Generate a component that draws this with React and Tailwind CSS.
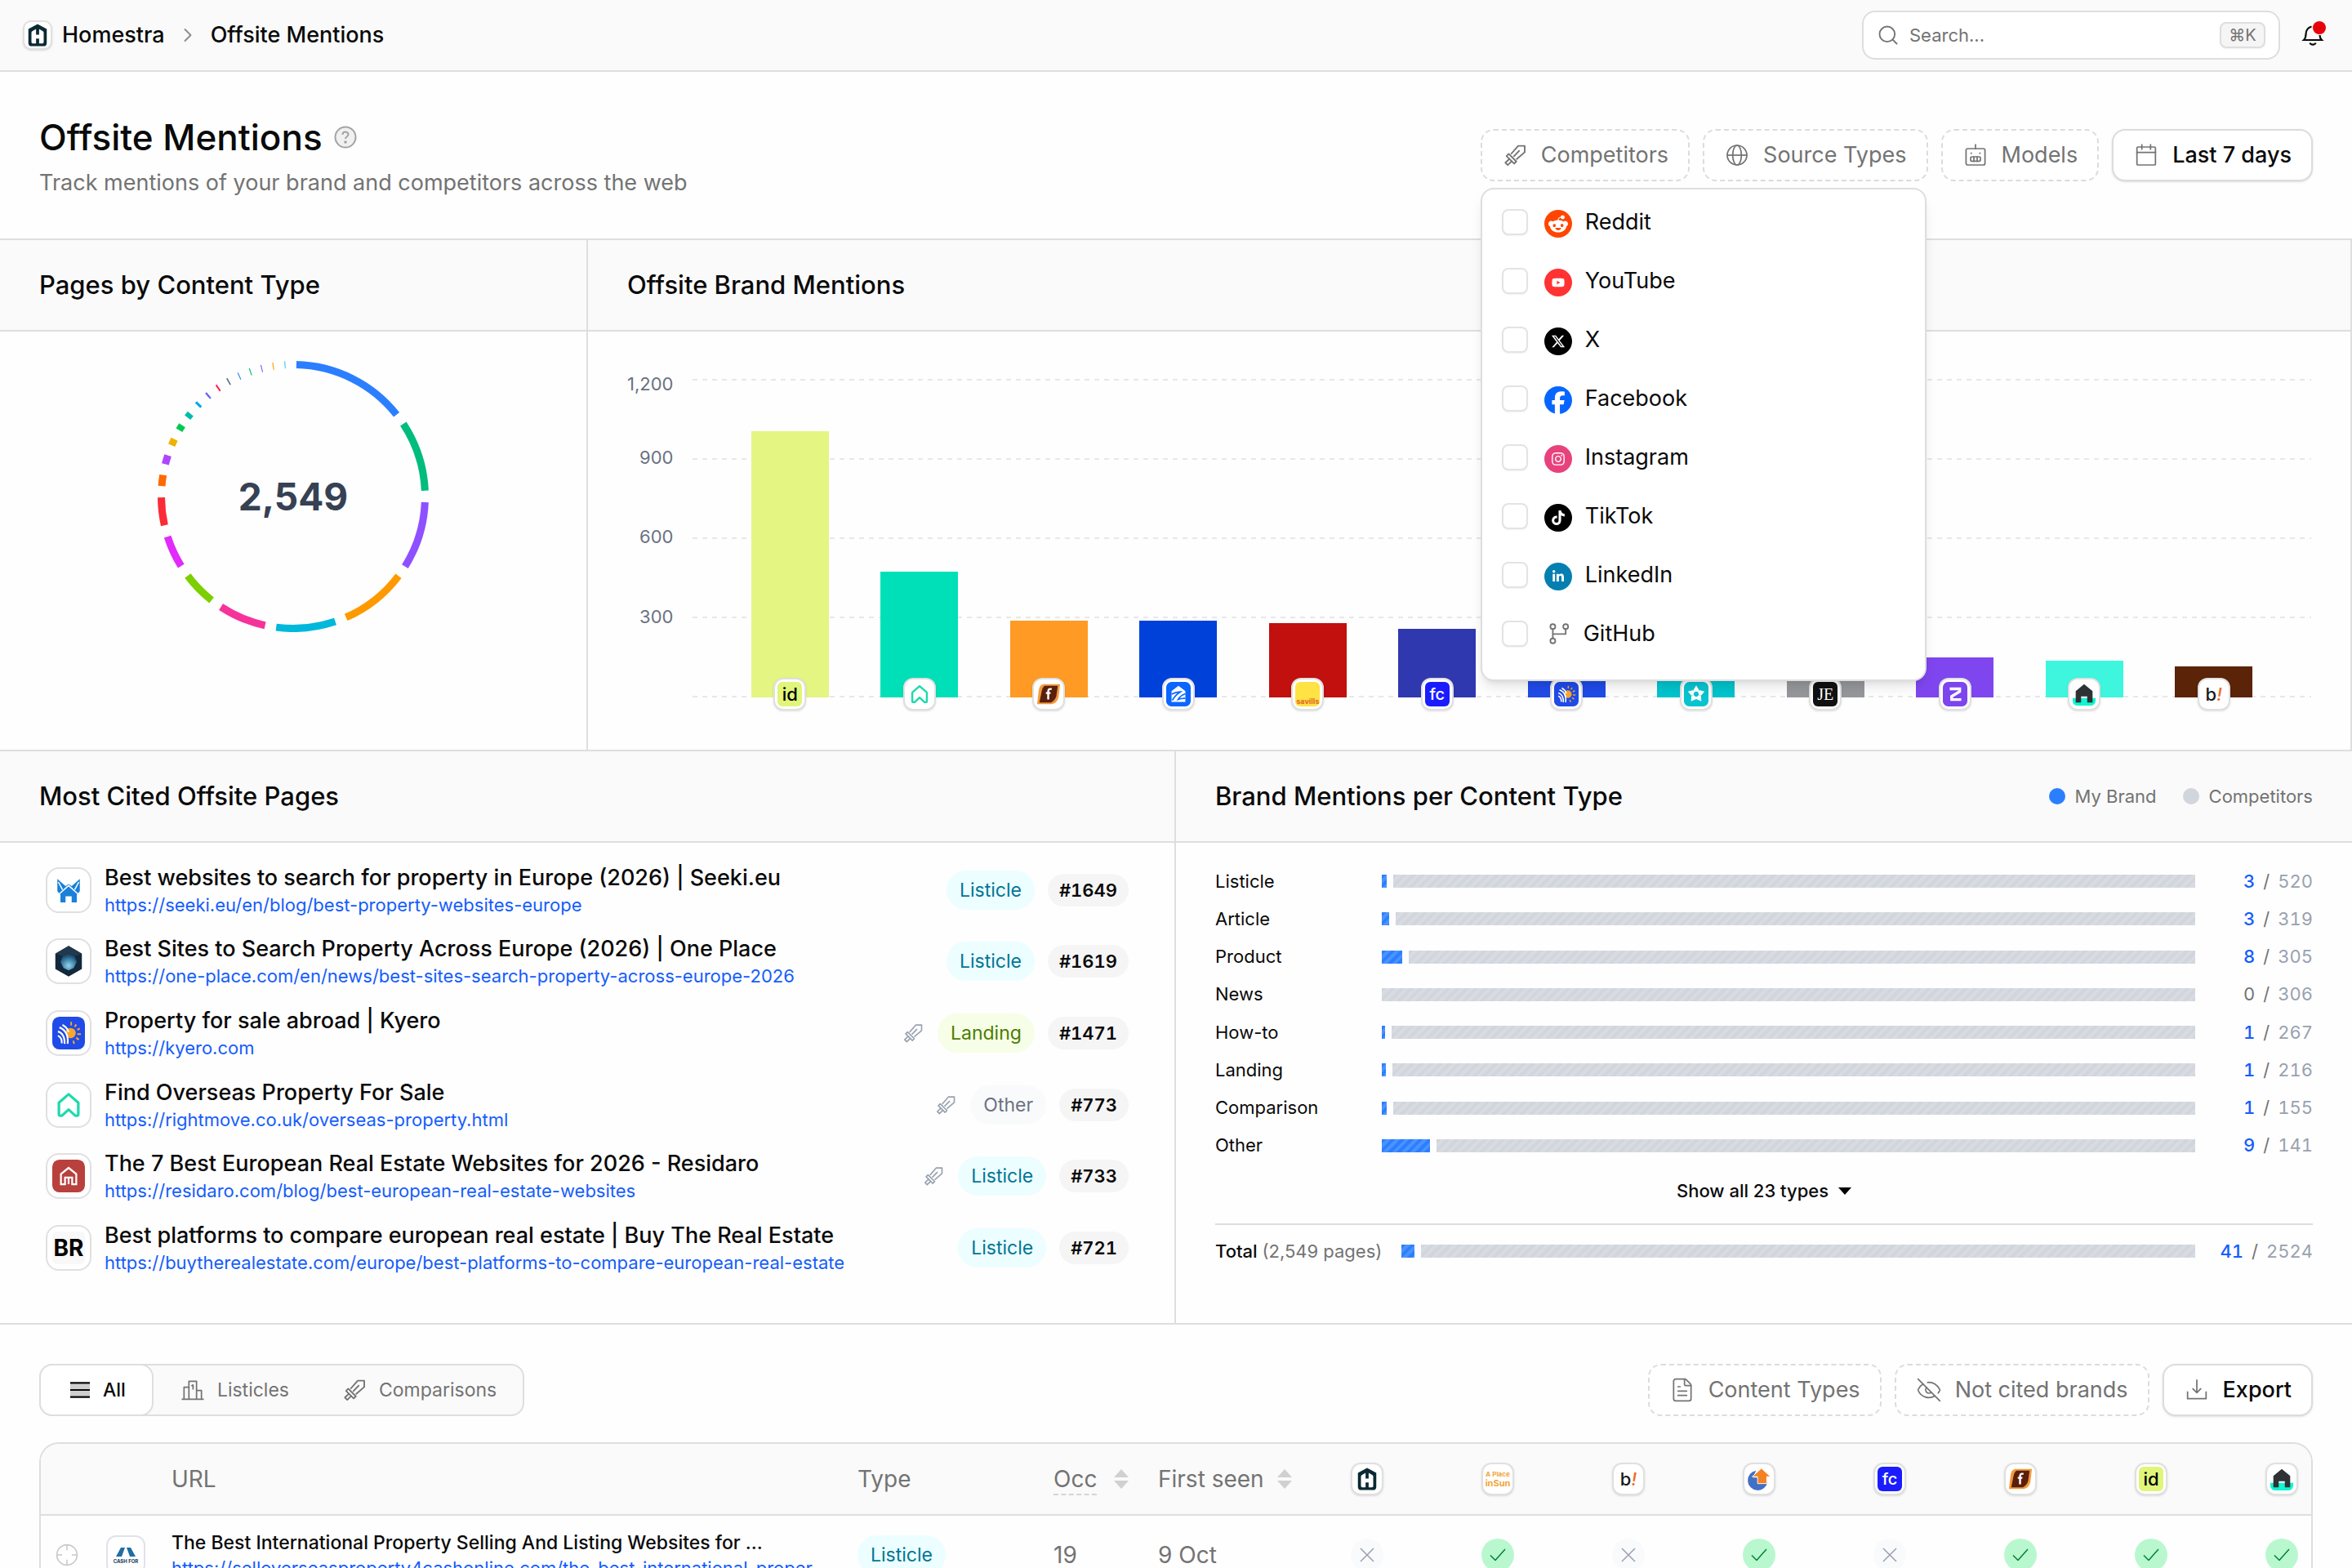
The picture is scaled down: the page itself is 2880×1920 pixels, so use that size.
import React, { useState } from "react";
import { Search, ChevronRight, FileText, EyeOff } from "lucide-react";
import {
  FaRedditAlien,
  FaYoutube,
  FaXTwitter,
  FaFacebook,
  FaInstagram,
  FaTiktok,
  FaLinkedinIn,
} from "react-icons/fa6";

/* ---------- icons ---------- */

function Icon({ className = "size-8", children, width = 1.5 }) {
  return (
    <svg
      viewBox="0 0 24 24"
      className={className}
      fill="none"
      stroke="currentColor"
      strokeWidth={width}
      strokeLinecap="square"
      strokeLinejoin="round"
      aria-hidden="true"
    >
      {children}
    </svg>
  );
}

const SwordIcon = ({ className }) => (
  <Icon className={className} width={1.4}>
    <path d="M8.800 10.500L15 3.500h6V9.300l-7.200 6.200" />
    <path d="M15.800 8.200l-4.600 4.700" />
    <path d="M6.300 10.800l7 7-2 2-7-7z" />
    <path d="M6.800 15.600l-3.600 3.300 2.200 2.200 3.500-3.400" />
  </Icon>
);

const GlobeIcon = () => (
  <Icon width={1.3}>
    <circle cx="12" cy="12" r="9" />
    <ellipse cx="12" cy="12" rx="4" ry="9" />
    <path d="M3.500 12h17" />
  </Icon>
);

const RobotIcon = () => (
  <Icon width={1.3}>
    <rect x="3.300" y="6" width="17.400" height="15" rx="1.500" />
    <path d="M12 2.500V6" />
    <rect x="7.500" y="13.500" width="9" height="4" rx="1" />
    <path d="M10.500 13.500v4M13.500 13.500v4M8 10.300h.1M16 10.300h.1" />
  </Icon>
);

const CalendarIcon = () => (
  <Icon width={1.3}>
    <rect x="3.500" y="4.500" width="17" height="16.500" rx="1" />
    <path d="M3.500 9.500h17M8 2.500v4M16 2.500v4" />
  </Icon>
);

const DownloadIcon = () => (
  <Icon width={1.3}>
    <path d="M12 3v11M8.500 11l3.500 3.500L15.500 11M3.500 14v6h17v-6" />
  </Icon>
);

const PodiumIcon = () => (
  <Icon width={1.3}>
    <path d="M2.500 20.500h19M4 20V9.500h4.500M8.500 20V4h7v16M15.500 12.500H20V20M11.300 8l1-.6v3.500" />
  </Icon>
);

const ListIcon = () => (
  <svg viewBox="0 0 24 24" className="size-8" aria-hidden="true">
    <path d="M3 5.500h18v13H3z" fill="#cfcfcf" />
    <path d="M3 5.500h18M3 12h18M3 18.500h18" stroke="#0a0a0a" strokeWidth="1.6" />
  </svg>
);

const HelpIcon = () => (
  <svg viewBox="0 0 28 28" className="size-7" fill="none" stroke="#a3a3a3" strokeWidth="2" aria-hidden="true">
    <circle cx="14" cy="14" r="12.500" fill="#f0f0f0" />
    <path d="M10.500 11c0-4.600 7-4.400 7-.3 0 2.500-3.500 2.600-3.500 5.300" />
    <circle cx="14" cy="20" r=".8" fill="#a3a3a3" />
  </svg>
);

const BellIcon = () => (
  <svg viewBox="0 0 32 32" className="size-8" fill="none" stroke="#0a0a0a" strokeWidth="2.200" aria-hidden="true">
    <path d="M14.500 5.500C9.500 7 7.500 10.500 7.500 15c0 4-1 5.500-2.500 7h22c-1.500-1.500-2.500-3-2.500-6" />
    <path d="M12.500 25.500c.8 2.700 6.200 2.700 7 0" />
  </svg>
);

const GitIcon = () => (
  <Icon width={1.6} className="size-7">
    <circle cx="5.500" cy="4.500" r="2.600" />
    <circle cx="19" cy="4.500" r="2.600" />
    <circle cx="5.500" cy="19.500" r="2.600" />
    <path d="M5.500 7.800v8.500M19 7.800v4.500H6" />
  </Icon>
);

const CrosshairIcon = () => (
  <Icon width={1.2} className="size-8">
    <circle cx="12" cy="12" r="9.300" />
    <path d="M12 3.500V7M12 17v3.500M3.500 12H7M17 12h3.500" />
  </Icon>
);

function Sorter() {
  return (
    <svg viewBox="0 0 18 24" className="h-6 w-[18px]" fill="#d0d0d0" aria-hidden="true">
      <path d="M9 0l9 10H0zM9 24l9-10H0z" />
    </svg>
  );
}

/* ---------- brand logos ---------- */

function HomestraLogo() {
  return (
    <svg viewBox="0 0 32 32" className="size-full">
      <path d="M16 1.500l12 6.500v18q0 4.500-4.500 4.500h-15Q4 30.500 4 26V8z" fill="#0b2a33" />
      <path
        d="M8 13q0-1.500 1-2l5-3v7.500h4V8l5 3q1 .5 1 2v12q0 2-2 2h-4v-6.500h-4V27h-4q-2 0-2-2z"
        fill="#fff"
      />
    </svg>
  );
}

function IdLogo() {
  return (
    <span className="flex size-full items-center justify-center rounded-md bg-[#e0f57a] text-[22px] font-medium leading-none text-black">
      id
    </span>
  );
}

function RightmoveLogo() {
  return (
    <svg viewBox="0 0 32 32" className="size-full" fill="none" stroke="#1fd9ad" strokeWidth="2.600" strokeLinejoin="round">
      <path d="M16 5.500l9.500 8.300V25q0 1.500-1.500 1.500h-1.500L16 20.500l-6.500 6H8q-1.500 0-1.500-1.500V13.800z" />
    </svg>
  );
}

function FLogo() {
  return (
    <svg viewBox="0 0 32 32" className="size-full">
      <path d="M9 3h22l-2 17q-2 8-9 9H1l2-17q1-8 6-9z" fill="#f39a3c" />
      <path d="M11 5h17l-2 14q-2 6-7 8H4l3-15q1-5 4-7z" fill="#5a1f0c" />
      <path d="M20 9.500c-3.500-1-4.500.5-4.500 3.500v10M12.500 14.500h6" stroke="#fff" strokeWidth="2.600" fill="none" />
    </svg>
  );
}

function ZillowLogo() {
  return (
    <svg viewBox="0 0 32 32" className="size-full">
      <rect width="32" height="32" rx="7" fill="#0a66ff" />
      <path d="M16 5l9 7v14H7V12z" fill="#fff" />
      <path d="M7 16c5-2.500 8-3 11.500-3-5 3-8 6.500-10.500 11" stroke="#0a66ff" strokeWidth="1.800" fill="none" />
      <path d="M25 15.500c-4.500 1.500-7.500 4-9.500 7.500 3-1.300 6-1.800 9.500-1.500" stroke="#0a66ff" strokeWidth="1.800" fill="none" />
    </svg>
  );
}

function SavillsLogo() {
  return (
    <span className="flex size-full items-end justify-center overflow-hidden rounded-md bg-[#ffe243] text-[9px] font-bold leading-3 text-[#e0662a]">
      savills
    </span>
  );
}

function FcLogo() {
  return (
    <span className="flex size-full items-center justify-center rounded-md bg-[#1a1cff] text-xl font-medium leading-none text-white">
      fc
    </span>
  );
}

function KyeroLogo() {
  return (
    <svg viewBox="0 0 32 32" className="size-full">
      <rect width="32" height="32" rx="7" fill="#1f4be8" />
      <circle cx="18" cy="16" r="5" fill="#f8a72b" />
      <path
        d="M18.500 5v3.500M23.500 7.500L22 10M27 11.500l-2.500 1.300M28 17h-3.500M26 22.500l-2.500-2M21.500 26.500l-1-3"
        stroke="#f8a72b"
        strokeWidth="1.600"
      />
      <path d="M5 10c7 0 12 8 10.500 17H5z" fill="#1f4be8" />
      <path
        d="M7 10.500c6 2 9 8 8 16M5.500 14.500c4.500 1 7 6 6.500 12M5.500 18.500c2.500 1 4 4 3.800 7.500M10 8c3 1.500 5 4 6 7"
        stroke="#fff"
        strokeWidth="1.700"
        fill="none"
      />
    </svg>
  );
}

function FlowerLogo() {
  return (
    <svg viewBox="0 0 32 32" className="size-full">
      <rect width="32" height="32" rx="7" fill="#08c4cf" />
      <g fill="#fff">
        {[0, 72, 144, 216, 288].map((a) => (
          <path key={a} d="M16 4.500l3.800 6.200-1.800 2.500q-2-1.200-4 0l-1.800-2.500z" transform={`rotate(${a} 16 16)`} />
        ))}
      </g>
    </svg>
  );
}

function JeLogo() {
  return (
    <span className="flex size-full items-center justify-center rounded-md bg-[#111] font-['Liberation_Serif',serif] text-xl leading-none text-white">
      JE
    </span>
  );
}

function ZLogo() {
  return (
    <svg viewBox="0 0 32 32" className="size-full">
      <rect width="32" height="32" rx="7" fill="#7c45ee" />
      <path d="M9 9h13v3.500L11.500 19v4H24" stroke="#fff" strokeWidth="3.600" fill="none" />
    </svg>
  );
}

function ShedLogo() {
  return (
    <svg viewBox="0 0 32 32" className="size-full">
      <path d="M1 21h30v3q0 7-7 7H8q-7 0-7-7z" fill="#10f5d2" />
      <path d="M16 3l11 9v15h-7v-8h-8v8H5V12z" fill="#2e3234" />
    </svg>
  );
}

function BLogo() {
  return (
    <span className="flex size-full items-center justify-center text-[22px] font-medium leading-none text-[#1a1a1a]">
      b<i className="text-[#f26a21]">!</i>
    </span>
  );
}

function SunLogo() {
  return (
    <span className="flex size-full flex-col items-center justify-center whitespace-nowrap text-[8px] font-bold leading-[10px] text-[#f0a63c]">
      <span>A Place</span>
      <span className="text-[11px] leading-3">inSun</span>
    </span>
  );
}

function ArrowLogo() {
  return (
    <svg viewBox="0 0 32 32" className="size-full">
      <path d="M12 5A13 13 0 1 0 27 20H15v-6H8z" fill="#4270c4" />
      <path d="M19 2l12 11h-5v9H14v-9H7z" fill="#f58220" stroke="#fff" strokeWidth="1" />
    </svg>
  );
}

function SeekiLogo() {
  return (
    <svg viewBox="0 0 32 32" className="size-full">
      <path d="M5 5l8 7 3-2 3 2 8-7v12l-3 3.500V28h-5v-6h-6v6H8v-7.500L5 17z" fill="#1a80d9" />
      <path d="M6.500 20l9.500-8.500 9.500 8.500M6 8l4 7.500M26 8l-4 7.500" stroke="#fff" strokeWidth="1.200" fill="none" />
    </svg>
  );
}

function HexLogo() {
  return (
    <svg viewBox="0 0 32 32" className="size-full">
      <defs>
        <radialGradient id="hex" cx="50%" cy="70%" r="60%">
          <stop offset="0" stopColor="#8fd6ef" />
          <stop offset="1" stopColor="#1b567f" />
        </radialGradient>
      </defs>
      <path d="M16 1l13 7.500v15L16 31 3 23.500v-15z" fill="#14283b" />
      <path d="M16 1l13 7.500L16 13 3 8.500z" fill="#22384e" />
      <path d="M10 11.500l6-2 6 2 2 5-3 6-5 2.500-5-2.500-3-6z" fill="url(#hex)" />
    </svg>
  );
}

function ResidaroLogo() {
  return (
    <svg viewBox="0 0 32 32" className="size-full" fill="none" stroke="#fff" strokeWidth="1.800">
      <rect width="32" height="32" rx="7" fill="#b9403c" stroke="none" />
      <path d="M8.500 24V14L16 8l7.500 6v10h-4v-6.500h-7V24z" />
      <path d="M16 18v6" />
    </svg>
  );
}

function BrLogo() {
  return (
    <span className="flex size-full items-center justify-center rounded-md bg-[#f8f8f8] text-[28px] font-bold leading-none text-black">
      BR
    </span>
  );
}

function CashLogo() {
  return (
    <span className="flex size-full flex-col items-center justify-center">
      <svg viewBox="0 0 28 14" className="h-3.5 w-7">
        <path d="M2 13L8 2h5L9 13zM26 13L20 2h-5l4 11z" fill="#1d6fa5" />
      </svg>
      <span className="whitespace-nowrap text-[6px] font-bold leading-[9px] text-[#123a5c]">CASH FOR</span>
    </span>
  );
}

function BrandTile({ logo: Logo }) {
  return (
    <span className="block size-10 rounded-xl border-2 border-[#e0e0e0] bg-white p-[3px] shadow-sm">
      <Logo />
    </span>
  );
}

/* ---------- data ---------- */

const sources = [
  { name: "Reddit", icon: FaRedditAlien, bg: "bg-[#ff4500]", size: "text-2xl" },
  { name: "YouTube", icon: FaYoutube, bg: "bg-[#ff3333]", size: "text-base" },
  { name: "X", icon: FaXTwitter, bg: "bg-black", size: "text-lg" },
  { name: "Facebook", full: FaFacebook },
  { name: "Instagram", icon: FaInstagram, bg: "bg-[#e8427c]", size: "text-lg" },
  { name: "TikTok", icon: FaTiktok, bg: "bg-black", size: "text-lg" },
  { name: "LinkedIn", icon: FaLinkedinIn, bg: "bg-[#047fb1]", size: "text-base" },
  { name: "GitHub" },
];

const slices = [
  [1.4, 51.6, "#2b7fff"],
  [56.6, 87.4, "#00bc7d"],
  [92.5, 122, "#8e51ff"],
  [127, 156.4, "#fe9a00"],
  [161.4, 187.4, "#00b8db"],
  [192.3, 213.2, "#f6339a"],
  [218.2, 233.1, "#7ccf00"],
  [238.2, 252.3, "#e12afb"],
  [257.4, 269.6, "#fb2c36"],
  [274.6, 279.4, "#ff6900"],
  [284.2, 288.2, "#ad46ff"],
  [292.9, 295.8, "#f0b100"],
  [300.2, 302.7, "#00c951"],
  [306.8, 308.9, "#00bba7"],
  [313.6, 314.7, "#00a6f4"],
  [319.5, 320.3, "#615fff"],
  [325, 325.7, "#ff2056"],
  [330.4, 331, "#62748e"],
  [335.7, 336.1, "#2b7fff"],
  [340.9, 341.3, "#00bc7d"],
  [346, 346.4, "#8e51ff"],
  [351.1, 351.5, "#fe9a00"],
  [356.3, 356.6, "#00b8db"],
];

const brands = [
  { value: 1003, color: "#e4f582", logo: IdLogo },
  { value: 474, color: "#00e0b8", logo: RightmoveLogo },
  { value: 289, color: "#ff9a24", logo: FLogo },
  { value: 289, color: "#0041d9", logo: ZillowLogo },
  { value: 280, color: "#c1100d", logo: SavillsLogo },
  { value: 258, color: "#3038b0", logo: FcLogo },
  { value: 230, color: "#1f4be8", logo: KyeroLogo },
  { value: 200, color: "#00c4cd", logo: FlowerLogo },
  { value: 170, color: "#96979a", logo: JeLogo },
  { value: 151, color: "#7f46ef", logo: ZLogo },
  { value: 138, color: "#3ef6de", logo: ShedLogo },
  { value: 117, color: "#5b2307", logo: BLogo },
];

const pages = [
  {
    title: "Best websites to search for property in Europe (2026) | Seeki.eu",
    url: "https://seeki.eu/en/blog/best-property-websites-europe",
    type: "Listicle",
    rank: 1649,
    logo: SeekiLogo,
  },
  {
    title: "Best Sites to Search Property Across Europe (2026) | One Place",
    url: "https://one-place.com/en/news/best-sites-search-property-across-europe-2026",
    type: "Listicle",
    rank: 1619,
    logo: HexLogo,
  },
  {
    title: "Property for sale abroad | Kyero",
    url: "https://kyero.com",
    type: "Landing",
    rank: 1471,
    competitor: true,
    logo: KyeroLogo,
  },
  {
    title: "Find Overseas Property For Sale",
    url: "https://rightmove.co.uk/overseas-property.html",
    type: "Other",
    rank: 773,
    competitor: true,
    logo: RightmoveLogo,
  },
  {
    title: "The 7 Best European Real Estate Websites for 2026 - Residaro",
    url: "https://residaro.com/blog/best-european-real-estate-websites",
    type: "Listicle",
    rank: 733,
    competitor: true,
    logo: ResidaroLogo,
  },
  {
    title: "Best platforms to compare european real estate | Buy The Real Estate",
    url: "https://buytherealestate.com/europe/best-platforms-to-compare-european-real-estate",
    type: "Listicle",
    rank: 721,
    logo: BrLogo,
  },
];

const contentTypes = [
  ["Listicle", 3, 520],
  ["Article", 3, 319],
  ["Product", 8, 305],
  ["News", 0, 306],
  ["How-to", 1, 267],
  ["Landing", 1, 216],
  ["Comparison", 1, 155],
  ["Other", 9, 141],
];

const tableBrands = [
  [HomestraLogo, false],
  [SunLogo, true],
  [BLogo, false],
  [ArrowLogo, true],
  [FcLogo, false],
  [FLogo, true],
  [IdLogo, true],
  [ShedLogo, true],
];

const typeStyles = {
  Listicle: "bg-cyan-50 text-cyan-700",
  Landing: "bg-lime-50 text-lime-700",
  Other: "bg-gray-50 text-gray-500",
};

/* ---------- pieces ---------- */

function TypePill({ type }) {
  return (
    <span className={`inline-block rounded-full px-4 text-[23px] leading-[48px] ${typeStyles[type]}`}>
      {type}
    </span>
  );
}

function FilterButton({ icon, children }) {
  return (
    <button
      type="button"
      className="flex h-16 items-center gap-4 rounded-2xl border-2 border-dashed border-[#dcdcdc] bg-white px-6 text-[27px] text-[#737373]"
    >
      {icon}
      {children}
    </button>
  );
}

function SolidButton({ icon, children }) {
  return (
    <button
      type="button"
      className="flex h-16 items-center gap-4 rounded-2xl border-2 border-[#dcdcdc] bg-white px-6 text-[27px] font-medium text-[#0a0a0a] shadow-sm"
    >
      <span className="text-[#737373]">{icon}</span>
      {children}
    </button>
  );
}

function SectionHeader({ title, children }) {
  return (
    <div className="flex items-center justify-between border-b-2 border-[#dedede] bg-[#fafafa] px-12 py-8">
      <h2 className="text-[31px] font-medium leading-[46px]">{title}</h2>
      {children}
    </div>
  );
}

function SourceMenu() {
  const [checked, setChecked] = useState([]);

  const toggle = (name) => {
    setChecked(checked.includes(name) ? checked.filter((n) => n !== name) : [...checked, name]);
  };

  return (
    <div className="absolute left-0 top-[72px] z-10 w-[546px] rounded-2xl border-2 border-[#dedede] bg-white px-6 pb-5 pt-1 shadow-lg">
      {sources.map((s) => (
        <label key={s.name} className="flex h-[72px] items-center text-[27px]">
          <input
            type="checkbox"
            checked={checked.includes(s.name)}
            onChange={() => toggle(s.name)}
            className="size-8 appearance-none rounded-lg border-2 border-[#e3e3e3] bg-white shadow-xs checked:bg-[#0a0a0a]"
          />
          {s.icon && (
            <span
              className={`ml-5 mr-4 mt-1 flex size-[34px] items-center justify-center rounded-full text-white ${s.bg} ${s.size}`}
            >
              <s.icon />
            </span>
          )}
          {s.full && <s.full className="ml-5 mr-4 mt-1 size-[34px] text-[#0866ff]" />}
          {!s.icon && !s.full && (
            <span className="ml-6 mr-4 text-[#737373]">
              <GitIcon />
            </span>
          )}
          {s.name}
        </label>
      ))}
    </div>
  );
}

const polar = (r, deg) => {
  const a = (deg * Math.PI) / 180;
  return `${166 + r * Math.sin(a)} ${166 - r * Math.cos(a)}`;
};

function Donut() {
  return (
    <div className="grid place-items-center pt-9">
      <svg viewBox="0 0 332 332" className="col-start-1 row-start-1 size-[332px]">
        {slices.map(([from, to, color]) => (
          <path
            key={from}
            fill={color}
            d={`M${polar(166, from)}A166 166 0 0 1 ${polar(166, to)}L${polar(157, to)}A157 157 0 0 0 ${polar(157, from)}Z`}
          />
        ))}
      </svg>
      <span className="col-start-1 row-start-1 text-[46px] font-bold leading-none text-gray-700">2,549</span>
    </div>
  );
}

function MentionsChart() {
  return (
    <div className="flex gap-6 px-12 pb-16 pt-[58px]">
      <div className="grid h-[390px] w-14 grid-rows-4 text-right text-[22px] leading-6 text-gray-500">
        <span className="-mt-1.5">1,200</span>
        <span className="-mt-3.5">900</span>
        <span className="-mt-3.5">600</span>
        <span className="-mt-3.5">300</span>
      </div>
      <div className="relative h-[390px] flex-1">
        <div className="absolute inset-0 flex flex-col justify-between">
          {[1200, 900, 600, 300, 0].map((v) => (
            <div key={v} className="h-[2px] bg-[repeating-linear-gradient(90deg,#e7e7ea_0_6px,transparent_6px_12px)]" />
          ))}
        </div>
        <div className="relative flex h-full items-end px-10">
          {brands.map((b) => (
            <div key={b.logo.name + b.color} className="flex h-full flex-1 items-end justify-center">
              <div
                className="relative flex w-3/5 justify-center"
                style={{ height: `${(b.value / 1200) * 100}%`, backgroundColor: b.color }}
              >
                <div className="absolute -bottom-4">
                  <BrandTile logo={b.logo} />
                </div>
              </div>
            </div>
          ))}
        </div>
      </div>
    </div>
  );
}

function CitedPages() {
  return (
    <ul className="grid h-[526px] grid-rows-6 px-14">
      {pages.map((p) => (
        <li key={p.url} className="flex items-center">
          <span className="size-14 shrink-0 rounded-2xl border-2 border-[#e0e0e0] bg-white p-[6px]">
            <p.logo />
          </span>
          <div className="ml-4 min-w-0 flex-1">
            <p className="truncate text-[27px] font-medium leading-9">{p.title}</p>
            <a href={p.url} className="block truncate text-[22px] leading-[30px] text-[#155dfc]">
              {p.url}
            </a>
          </div>
          {p.competitor && <SwordIcon className="mr-4 size-7 text-[#99a1af]" />}
          <TypePill type={p.type} />
          <span className="ml-4 rounded-full bg-[#f5f5f5] px-3.5 text-[22px] font-semibold leading-10 tabular-nums">
            #{p.rank}
          </span>
        </li>
      ))}
    </ul>
  );
}

function SplitBar({ mine, others }) {
  return (
    <div className="flex h-4 flex-1 gap-2">
      {mine > 0 && (
        <div
          className="basis-0 bg-[#2b7fff] bg-[repeating-linear-gradient(135deg,transparent_0_4px,rgba(255,255,255,0.15)_4px_8px)]"
          style={{ flexGrow: mine }}
        />
      )}
      <div
        className="basis-0 bg-[#d1d5dc] bg-[repeating-linear-gradient(135deg,transparent_0_4px,rgba(255,255,255,0.15)_4px_8px)]"
        style={{ flexGrow: others }}
      />
    </div>
  );
}

function Count({ mine, others }) {
  return (
    <span className="flex w-[120px] justify-end gap-2.5 text-[#737373] tabular-nums">
      <span className={mine > 0 ? "font-medium text-[#155dfc]" : ""}>{mine}</span>
      <span>/</span>
      <span className="text-[#99a1af]">{others}</span>
    </span>
  );
}

function TypeMentions() {
  return (
    <div className="px-12 pt-6 text-[22px]">
      <div className="grid h-[370px] grid-rows-8">
        {contentTypes.map(([name, mine, others]) => (
          <div key={name} className="flex items-center gap-6">
            <span className="w-[180px]">{name}</span>
            <SplitBar mine={mine} others={others} />
            <Count mine={mine} others={others} />
          </div>
        ))}
      </div>
      <button type="button" className="mx-auto mt-3 flex h-10 items-center gap-3 font-medium">
        Show all 23 types
        <svg viewBox="0 0 16 9" className="h-[9px] w-4">
          <path d="M0 0h16L8 9z" />
        </svg>
      </button>
      <div className="mt-5 flex items-center gap-6 border-t-2 border-[#dedede] pt-4 leading-8">
        <span className="font-medium">
          Total <span className="font-normal text-[#737373]">(2,549 pages)</span>
        </span>
        <SplitBar mine={41} others={2524} />
        <Count mine={41} others={2524} />
      </div>
    </div>
  );
}

function UrlTable() {
  return (
    <div className="mt-8 overflow-hidden rounded-t-3xl border-2 border-b-0 border-[#dedede]">
      <table className="w-full table-fixed border-separate border-spacing-0 text-left text-[28px] text-[#737373]">
        <colgroup>
          <col className="w-16" />
          <col className="w-20" />
          <col />
          <col className="w-60" />
          <col className="w-32" />
          <col className="w-[236px]" />
          {tableBrands.map(([Logo], i) => (
            <col key={i} className={i < 7 ? "w-40" : "w-[72px]"} />
          ))}
        </colgroup>
        <thead>
          <tr className="bg-[#fafafa] [&>th]:h-[88px] [&>th]:border-b-2 [&>th]:border-[#dedede] [&>th]:pl-4 [&>th]:font-normal">
            <th />
            <th />
            <th>URL</th>
            <th>Type</th>
            <th>
              <span className="flex items-center justify-between pr-5">
                <span className="underline decoration-[#d4d4d4] decoration-dashed decoration-2 underline-offset-8">Occ</span>
                <Sorter />
              </span>
            </th>
            <th>
              <span className="flex items-center gap-4">
                First seen
                <Sorter />
              </span>
            </th>
            {tableBrands.map(([Logo], i) => (
              <th key={i}>
                <BrandTile logo={Logo} />
              </th>
            ))}
          </tr>
        </thead>
        <tbody>
          <tr className="[&>td]:h-24 [&>td]:pl-4">
            <td className="text-[#c8c8c8]">
              <CrosshairIcon />
            </td>
            <td>
              <span className="block size-12 rounded-xl border-2 border-[#dfe3ea] bg-white">
                <CashLogo />
              </span>
            </td>
            <td>
              <p className="truncate text-[23px] font-medium leading-8 text-[#0a0a0a]">
                The Best International Property Selling And Listing Websites for ...
              </p>
              <a
                href="https://selloverseasproperty4cashonline.com"
                className="block truncate text-[22px] leading-[30px] text-[#155dfc]"
              >
                https://selloverseasproperty4cashonline.com/the-best-international-proper...
              </a>
            </td>
            <td>
              <TypePill type="Listicle" />
            </td>
            <td>19</td>
            <td>9 Oct</td>
            {tableBrands.map(([, cited], i) => (
              <td key={i}>
                <span
                  className={`flex size-10 items-center justify-center rounded-full ${
                    cited ? "bg-[#b9f8cf] text-[#008236]" : "bg-gray-50 text-[#99a1af]"
                  }`}
                >
                  <Icon className="size-6" width={1.5}>
                    <path d={cited ? "M3.500 13l5.500 5.500L20.500 5.500" : "M4.500 4.500l15 15M19.500 4.500l-15 15"} />
                  </Icon>
                </span>
              </td>
            ))}
          </tr>
        </tbody>
      </table>
    </div>
  );
}

export default function App() {
  const [query, setQuery] = useState("");

  return (
    <div className="h-screen overflow-hidden bg-[#fefefe] font-['Inter',sans-serif] text-[#0a0a0a]">
      <header className="flex h-[88px] items-center justify-between border-b-2 border-[#dedede] bg-[#fafafa] pl-7 pr-8">
        <nav className="flex items-center text-[27px] font-medium">
          <span className="mr-3 size-9 rounded-[10px] border-2 border-[#e0e0e0] bg-white p-px shadow-sm">
            <HomestraLogo />
          </span>
          <a href="#home">Homestra</a>
          <ChevronRight className="mx-3.5 size-7 text-[#8a8a8a]" strokeWidth={1.6} />
          <a href="#offsite">Offsite Mentions</a>
        </nav>
        <div className="flex items-center gap-6">
          <label className="flex h-[60px] w-[512px] items-center rounded-2xl border-2 border-[#dedede] bg-white px-4 text-[#737373]">
            <Search className="size-7" strokeWidth={1.6} />
            <input
              type="text"
              aria-label="Search"
              placeholder="Search..."
              value={query}
              onChange={(e) => setQuery(e.target.value)}
              className="ml-3 min-w-0 flex-1 text-[22px] outline-none placeholder:text-[#737373]"
            />
            <kbd className="flex h-8 w-14 items-center justify-center rounded-lg border-2 border-[#dedede] bg-[#f5f5f5] font-['Inter',sans-serif] text-xl shadow-xs">
              ⌘K
            </kbd>
          </label>
          <button type="button" aria-label="Notifications" className="relative">
            <BellIcon />
            <span className="absolute -top-px right-0 size-4 rounded-full bg-[#e7000b]" />
          </button>
        </div>
      </header>

      <section className="flex items-center justify-between border-b-2 border-[#dedede] px-12 py-12">
        <div>
          <div className="flex items-center gap-3.5">
            <h1 className="text-[44px] font-medium leading-[64px]">Offsite Mentions</h1>
            <HelpIcon />
          </div>
          <p className="mt-1 text-[27px] leading-10 text-[#737373]">
            Track mentions of your brand and competitors across the web
          </p>
        </div>
        <div className="relative flex gap-4">
          <FilterButton icon={<SwordIcon className="size-8" />}>Competitors</FilterButton>
          <FilterButton icon={<GlobeIcon />}>Source Types</FilterButton>
          <FilterButton icon={<RobotIcon />}>Models</FilterButton>
          <SolidButton icon={<CalendarIcon />}>Last 7 days</SolidButton>
          <SourceMenu />
        </div>
      </section>

      <div className="grid grid-cols-4 border-b-2 border-[#dedede]">
        <section className="border-r-2 border-[#dedede]">
          <SectionHeader title="Pages by Content Type" />
          <Donut />
        </section>
        <section className="col-span-3 border-r-2 border-[#dedede]">
          <SectionHeader title="Offsite Brand Mentions" />
          <MentionsChart />
        </section>
      </div>

      <div className="grid grid-cols-2 border-b-2 border-[#dedede]">
        <section className="border-r-2 border-[#dedede]">
          <SectionHeader title="Most Cited Offsite Pages" />
          <div className="pb-12 pt-[14px]">
            <CitedPages />
          </div>
        </section>
        <section>
          <SectionHeader title="Brand Mentions per Content Type">
            <div className="flex items-center gap-8 text-[22px] text-[#737373]">
              <span className="flex items-center gap-3">
                <span className="size-5 rounded-full bg-[#2b7fff]" />
                My Brand
              </span>
              <span className="flex items-center gap-3">
                <span className="size-5 rounded-full bg-[#d1d5dc]" />
                Competitors
              </span>
            </div>
          </SectionHeader>
          <TypeMentions />
        </section>
      </div>

      <section className="px-12 pt-12">
        <div className="flex items-center justify-between">
          <div className="flex h-16 items-stretch rounded-2xl border-2 border-[#dedede] bg-[#fafafa] text-[23px] text-[#737373]">
            <button
              type="button"
              className="-my-[2px] -ml-[2px] flex items-center gap-3 rounded-2xl border-2 border-[#dedede] bg-white px-8 font-medium text-[#0a0a0a]"
            >
              <ListIcon />
              All
            </button>
            <button type="button" className="flex items-center gap-3.5 px-8">
              <PodiumIcon />
              Listicles
            </button>
            <button type="button" className="flex items-center gap-3.5 px-8">
              <SwordIcon className="size-8" />
              Comparisons
            </button>
          </div>
          <div className="flex gap-4">
            <FilterButton icon={<FileText className="size-8" strokeWidth={1.3} />}>Content Types</FilterButton>
            <FilterButton icon={<EyeOff className="size-8" strokeWidth={1.3} />}>Not cited brands</FilterButton>
            <SolidButton icon={<DownloadIcon />}>Export</SolidButton>
          </div>
        </div>
        <UrlTable />
      </section>
    </div>
  );
}
